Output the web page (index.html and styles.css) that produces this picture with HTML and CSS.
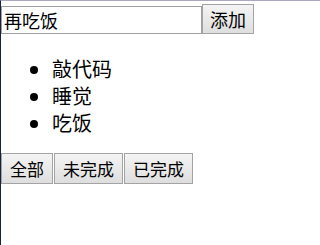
FILE: index.html
```html
<!DOCTYPE html>
<html lang="zh-CN">
<head>
<meta charset="utf-8">
<title>Todo</title>
<link rel="stylesheet" href="styles.css">
</head>
<body>
<div class="page">
  <div class="add-row">
    <input class="todo-input" type="text" value="再吃饭">
    <button class="btn btn-add">添加</button>
  </div>
  <ul class="todo-list">
    <li>敲代码</li>
    <li>睡觉</li>
    <li>吃饭</li>
  </ul>
  <div class="filters">
    <button class="btn btn-filter">全部</button>
    <button class="btn btn-filter">未完成</button>
    <button class="btn btn-filter">已完成</button>
  </div>
</div>
</body>
</html>
```

FILE: styles.css
```css
html, body {
  margin: 0;
  padding: 0;
  background: #ffffff;
}

body {
  font-family: "Noto Sans CJK SC", "Noto Sans", sans-serif;
  color: #000000;
}

.page {
  min-height: 100vh;
  box-sizing: border-box;
  border-top: 1px solid #aba7c2;
  border-left: 1px solid #16223f;
}

.add-row {
  display: flex;
  align-items: flex-end;
  padding-top: 3px;
}

.todo-input {
  box-sizing: border-box;
  width: 201px;
  height: 28px;
  margin: 0;
  padding: 0 2px;
  border: 1px solid #a0a0a0;
  font-family: inherit;
  font-size: 18px;
  color: #000;
  background: #fff;
  outline: none;
}

.btn {
  box-sizing: border-box;
  margin: 0;
  border: 1px solid #a3a3a3;
  border-radius: 0;
  background: linear-gradient(#f4f4f4, #dedede);
  font-family: inherit;
  color: #000;
  line-height: 1;
}

.btn-add {
  height: 30px;
  padding: 0 7px;
  font-size: 18px;
}

.todo-list {
  margin: 21px 0 17px;
  padding-left: 51px;
  font-size: 20px;
  line-height: 27px;
}

.filters {
  display: flex;
  gap: 1px;
}

.btn-filter {
  height: 31px;
  padding: 0 8px;
  font-size: 17px;
}
```
